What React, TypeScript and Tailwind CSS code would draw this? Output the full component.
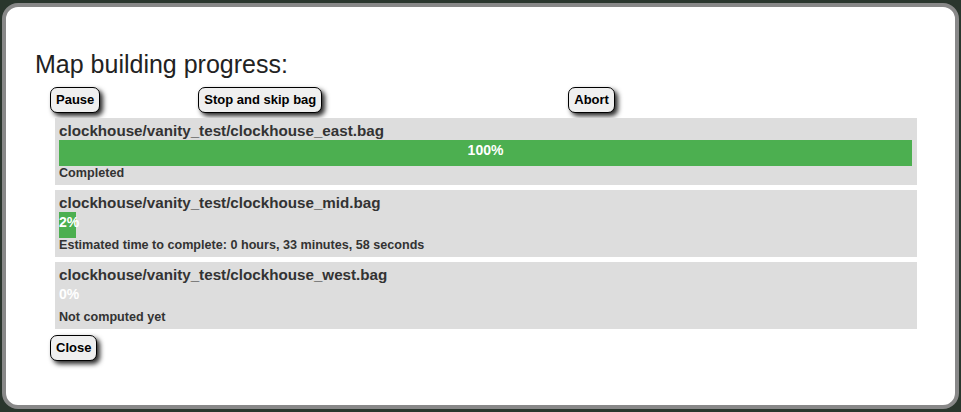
const bags = [
  { name: "clockhouse/vanity_test/clockhouse_east.bag", pct: 100, status: "Completed" },
  { name: "clockhouse/vanity_test/clockhouse_mid.bag", pct: 2, status: "Estimated time to complete: 0 hours, 33 minutes, 58 seconds" },
  { name: "clockhouse/vanity_test/clockhouse_west.bag", pct: 0, status: "Not computed yet" },
];

function Btn({ label, className = "" }: { label: string; className?: string }) {
  return (
    <button
      className={`h-[26px] px-[5px] border border-black rounded-[7px] bg-[#efefef] text-black text-[13px] font-bold leading-[16px] shadow-[3px_3px_5px_rgba(0,0,0,0.85)] ${className}`}
    >
      {label}
    </button>
  );
}

export default function App() {
  return (
    <div className="w-[961px] h-[412px] bg-[#2a362d] pt-[3px] pl-[2px] font-['Liberation_Sans',Arial,sans-serif]">
      <div className="w-[957px] h-[406px] bg-white border-4 border-[#888888] rounded-[16px] pt-[44px] pl-[29px]">
        <h1 className="text-[25px] leading-[27px] text-[#222]">Map building progress:</h1>

        <div className="pl-[15px] mt-[9px]">
          <div className="flex">
            <Btn label="Pause" />
            <Btn label="Stop and skip bag" className="ml-[98px]" />
            <Btn label="Abort" className="ml-[246px]" />
          </div>

          <div className="ml-[5px] w-[862px] mt-[5px] flex flex-col gap-[5px]">
            {bags.map((b) => (
              <div key={b.name} className="bg-[#dddddd] pt-[4px] pl-[4px] pr-[5px] pb-[5px]">
                <div className="h-[18px] text-[15.2px] leading-[18px] font-bold text-[#333]">{b.name}</div>
                <div className="h-[26px]">
                  <div
                    className="h-[26px] bg-[#4caf50] text-white text-[14px] font-bold leading-[20px] text-center whitespace-nowrap"
                    style={{ width: `${b.pct}%` }}
                  >
                    {b.pct}%
                  </div>
                </div>
                <div className="text-[12.6px] leading-[14px] font-bold text-[#333]">{b.status}</div>
              </div>
            ))}
          </div>

          <Btn label="Close" className="mt-[6px]" />
        </div>
      </div>
    </div>
  );
}
